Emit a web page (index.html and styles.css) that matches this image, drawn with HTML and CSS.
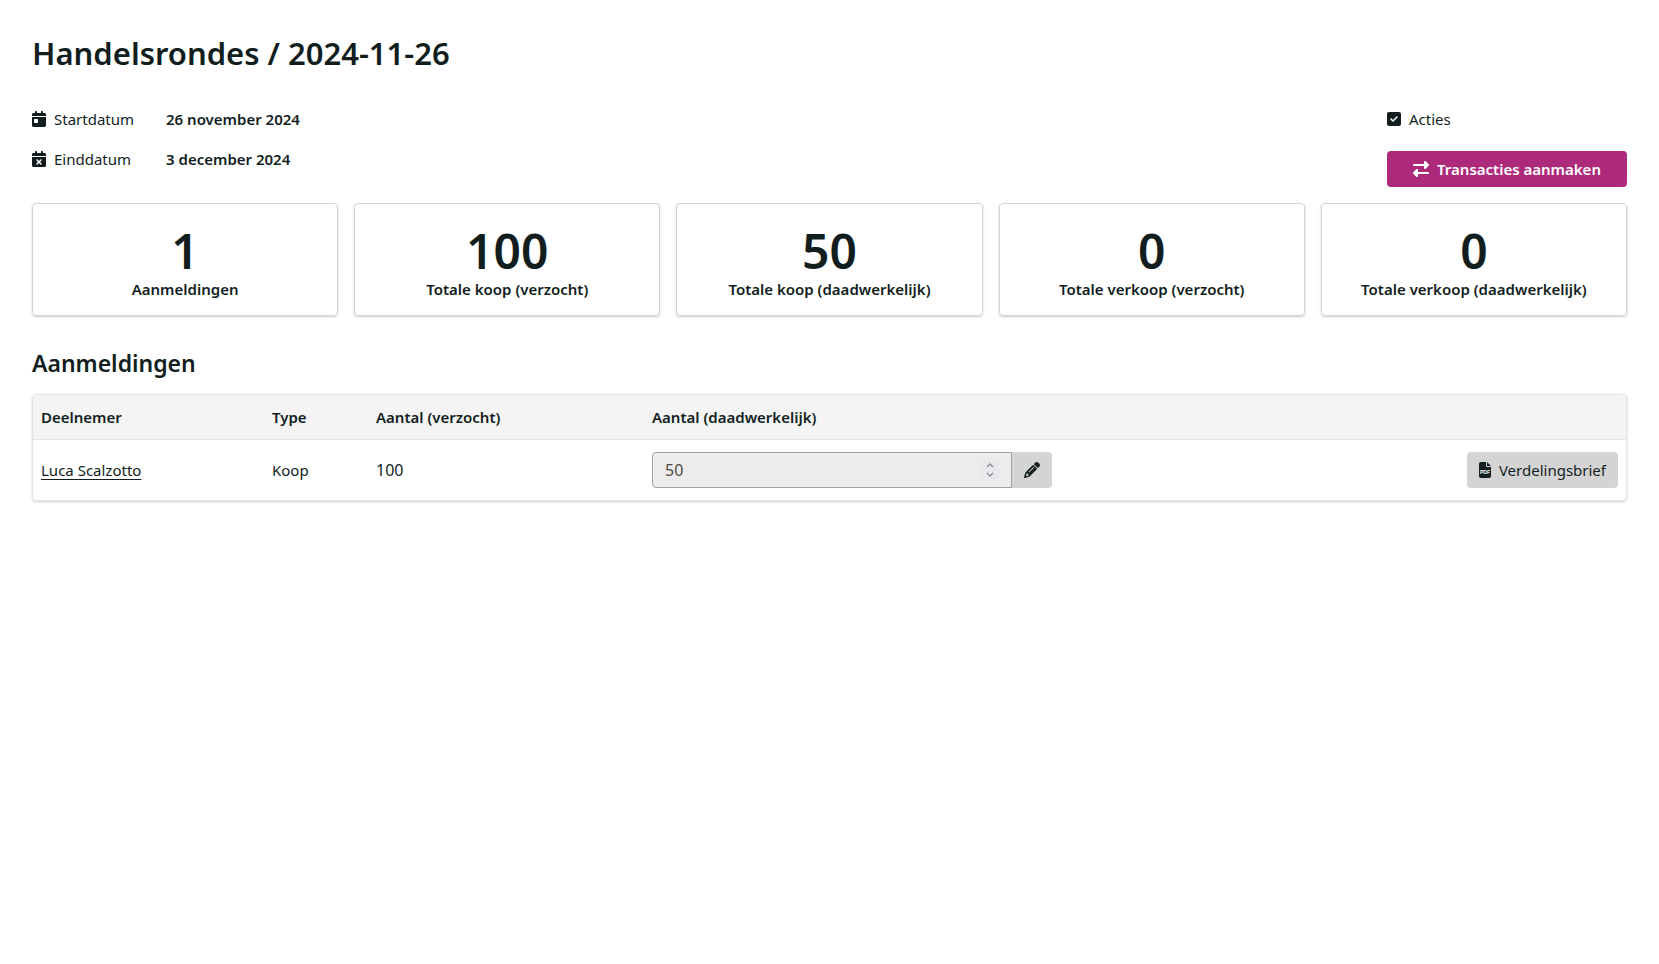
FILE: index.html
```
<!DOCTYPE html>
<html lang="nl">
<head>
<meta charset="utf-8">
<title>Handelsrondes / 2024-11-26</title>
<meta name="viewport" content="width=device-width, initial-scale=1">
<link rel="stylesheet" href="styles.css">
</head>
<body>
<main class="page">
  <h1 class="page-title">Handelsrondes / 2024-11-26</h1>

  <section class="summary">
    <dl class="dates">
      <dt class="label"><svg class="icon" viewBox="0 0 448 512" aria-hidden="true"><path d="M128 0c17.700 0 32 14.300 32 32V64H288V32c0-17.700 14.300-32 32-32s32 14.300 32 32V64h48c26.500 0 48 21.500 48 48v48H0V112C0 85.500 21.500 64 48 64H96V32c0-17.700 14.300-32 32-32zM0 192H448V464c0 26.500-21.500 48-48 48H48c-26.500 0-48-21.500-48-48V192zm80 64c-8.800 0-16 7.200-16 16v96c0 8.800 7.200 16 16 16h96c8.800 0 16-7.200 16-16V272c0-8.800-7.200-16-16-16H80z"/></svg>Startdatum</dt>
      <dd class="date">26 november 2024</dd>
      <dt class="label"><svg class="icon" viewBox="0 0 448 512" aria-hidden="true"><path fill-rule="evenodd" d="M128 0c17.700 0 32 14.300 32 32V64H288V32c0-17.700 14.300-32 32-32s32 14.300 32 32V64h48c26.500 0 48 21.500 48 48v48H0V112C0 85.500 21.500 64 48 64H96V32c0-17.700 14.300-32 32-32zM0 192H448V464c0 26.500-21.500 48-48 48H48c-26.500 0-48-21.500-48-48V192zM305 305c9.400-9.400 9.400-24.600 0-33.900s-24.600-9.400-33.900 0l-47 47-47-47c-9.400-9.400-24.600-9.400-33.900 0s-9.400 24.600 0 33.900l47 47-47 47c-9.400 9.400-9.400 24.600 0 33.900s24.600 9.400 33.900 0l47-47 47 47c9.400 9.400 24.600 9.400 33.900 0s9.400-24.600 0-33.900l-47-47 47-47z"/></svg>Einddatum</dt>
      <dd class="date">3 december 2024</dd>
    </dl>
    <div class="actions">
      <div class="label"><svg class="icon" viewBox="0 0 448 512" aria-hidden="true"><path d="M64 32C28.700 32 0 60.700 0 96V416c0 35.300 28.700 64 64 64H384c35.300 0 64-28.700 64-64V96c0-35.300-28.700-64-64-64H64zM337 209L209 337c-9.400 9.400-24.600 9.400-33.900 0l-64-64c-9.400-9.400-9.400-24.600 0-33.900s24.600-9.400 33.900 0l47 47L303 175c9.400-9.400 24.600-9.400 33.900 0s9.400 24.600 0 33.900z"/></svg>Acties</div>
      <button class="button button-primary" type="button"><svg class="icon" viewBox="0 0 512 512" aria-hidden="true"><path d="M32 96l320 0V32c0-12.900 7.800-24.600 19.800-29.600s25.700-2.200 34.900 6.900l96 96c6 6 9.400 14.100 9.400 22.600s-3.400 16.600-9.400 22.600l-96 96c-9.200 9.200-22.900 11.900-34.900 6.900s-19.800-16.600-19.800-29.600V160L32 160c-17.700 0-32-14.300-32-32s14.300-32 32-32zM480 352c17.700 0 32 14.300 32 32s-14.300 32-32 32H160v64c0 12.900-7.800 24.600-19.800 29.600s-25.700 2.200-34.900-6.900l-96-96c-6-6-9.400-14.100-9.400-22.600s3.400-16.600 9.400-22.600l96-96c9.200-9.200 22.900-11.900 34.900-6.900s19.800 16.600 19.800 29.600l0 64H480z"/></svg>Transacties aanmaken</button>
    </div>
  </section>

  <section class="stats">
    <div class="card"><div class="value">1</div><div class="caption">Aanmeldingen</div></div>
    <div class="card"><div class="value">100</div><div class="caption">Totale koop (verzocht)</div></div>
    <div class="card"><div class="value">50</div><div class="caption">Totale koop (daadwerkelijk)</div></div>
    <div class="card"><div class="value">0</div><div class="caption">Totale verkoop (verzocht)</div></div>
    <div class="card"><div class="value">0</div><div class="caption">Totale verkoop (daadwerkelijk)</div></div>
  </section>

  <h2 class="section-title">Aanmeldingen</h2>
  <div class="table-box">
    <table class="table">
      <colgroup><col class="col-name"><col class="col-type"><col class="col-asked"><col class="col-actual"><col></colgroup>
      <thead>
        <tr><th scope="col">Deelnemer</th><th scope="col">Type</th><th scope="col">Aantal (verzocht)</th><th scope="col" id="actual">Aantal (daadwerkelijk)</th><td></td></tr>
      </thead>
      <tbody>
        <tr>
          <td><a class="link" href="#">Luca Scalzotto</a></td>
          <td>Koop</td>
          <td class="number">100</td>
          <td>
            <div class="field">
              <div class="input-wrap">
                <input class="input" type="number" value="50" aria-labelledby="actual" disabled>
                <svg class="spinner" viewBox="0 0 18 18" aria-hidden="true"><path d="M6 6l3-3 3 3M6 12l3 3 3-3"/></svg>
              </div>
              <button class="edit" type="button" aria-label="Bewerken"><svg class="icon" viewBox="0 0 512 512" aria-hidden="true"><path d="M410.300 231l11.300-11.300-33.900-33.900-62.100-62.100L291.700 89.800l-11.300 11.300-22.600 22.600L58.600 322.900c-10.400 10.400-18 23.300-22.200 37.400L1 480.700c-2.500 8.400-.2 17.500 6.100 23.700s15.300 8.500 23.700 6.100l120.300-35.400c14.100-4.200 27-11.800 37.400-22.200L387.700 253.700 410.300 231zM160 399.400l-9.100 22.700c-4 3.100-8.500 5.400-13.300 6.900L59.400 452l23-78.100c1.400-4.900 3.800-9.400 6.900-13.300l22.700-9.100v32c0 8.800 7.200 16 16 16h32zM362.700 18.700L348.300 33.200 325.700 55.800 314.300 67.100l33.900 33.900 62.100 62.100 33.900 33.900 11.300-11.300 22.600-22.600 14.500-14.500c25-25 25-65.500 0-90.500L453.300 18.700c-25-25-65.500-25-90.500 0zm-47.400 168l-144 144c-6.200 6.200-16.400 6.200-22.600 0s-6.200-16.400 0-22.600l144-144c6.200-6.200 16.400-6.200 22.600 0s6.200 16.400 0 22.600z"/></svg></button>
            </div>
          </td>
          <td class="cell-end"><button class="button" type="button"><svg class="icon" viewBox="0 0 12 16" aria-hidden="true"><path d="M2 0h5v4a1 1 0 0 0 1 1h4v9a2 2 0 0 1-2 2H2a2 2 0 0 1-2-2V2a2 2 0 0 1 2-2zM8 0l4 4H8z"/><text class="pdf" x="6" y="12" text-anchor="middle">PDF</text></svg>Verdelingsbrief</button></td>
        </tr>
      </tbody>
    </table>
  </div>
</main>
</body>
</html>
```
FILE: styles.css
```
* { box-sizing: border-box; }
body {
  margin: 0;
  background: #fff;
  color: #121e1e;
  font: 400 15px/24px "Noto Sans", sans-serif;
}
.page { padding: 32px; }
.page-title { margin: 0; font-size: 31px; line-height: 42px; font-weight: 600; }
.section-title { margin: 31px 0 15px; font-size: 23px; line-height: 32px; font-weight: 600; }
.icon { display: block; flex: none; height: 16px; fill: currentColor; }
.label { display: flex; align-items: center; gap: 8px; }

.summary { display: flex; justify-content: space-between; margin-top: 33px; }
.dates { display: grid; grid-template-columns: auto auto; gap: 16px 32px; align-content: start; margin: 0; }
.date { margin: 0; font-weight: 600; }
.actions { display: flex; flex-direction: column; gap: 20px; width: 240px; }

.button {
  display: inline-flex; align-items: center; justify-content: center; gap: 8px;
  height: 36px; padding: 0 12px;
  border: 0; border-radius: 4px;
  background: #d4d4d4; color: inherit; font: inherit;
}
.button-primary { background: #ad2a7b; color: #fff; font-weight: 600; }

.stats { display: grid; grid-template-columns: repeat(5, 1fr); gap: 16px; margin-top: 16px; }
.card {
  padding: 19px 16px 16px;
  border: 1px solid #d4d4d4; border-radius: 4px;
  box-shadow: 0 1px 3px rgba(0, 0, 0, .1), 0 1px 2px rgba(0, 0, 0, .1);
  text-align: center; font-weight: 600;
}
.value { font-size: 48px; line-height: 56px; }
.caption { line-height: 20px; white-space: nowrap; }

.table-box {
  overflow: hidden;
  border: 1px solid #e4e4e4; border-radius: 4px;
  box-shadow: 0 1px 3px rgba(0, 0, 0, .1), 0 1px 2px rgba(0, 0, 0, .1);
}
.table { width: 100%; border-collapse: collapse; table-layout: fixed; }
.col-name { width: 231px; }
.col-type { width: 104px; }
.col-asked { width: 276px; }
.col-actual { width: 416px; }
.table th, .table td { padding: 12px 8px; text-align: left; }
.table th { padding: 10px 8px; font-weight: 600; }
.table thead tr { background: #f4f4f4; border-bottom: 1px solid #e4e4e4; }
.table .cell-end { text-align: right; }
.table .number { font-size: 16px; }
.cell-end .button { vertical-align: top; }
.link { color: inherit; text-underline-offset: 3px; }

.field { display: flex; }
.input-wrap { position: relative; width: 360px; }
.input {
  display: block; width: 100%; height: 36px; padding: 0 12px;
  border: 1px solid #a1a1a1; border-radius: 4px 0 0 4px;
  background: #ececec; color: #4b4b4b; font: inherit; font-size: 16px;
  appearance: textfield;
}
.input::-webkit-inner-spin-button { display: none; }
.spinner {
  position: absolute; right: 13px; top: 9px; width: 18px; height: 18px;
  background: #e9e9ed; fill: none; stroke: #8f8f9d; stroke-width: 1.5;
}
.edit {
  display: flex; align-items: center; justify-content: center;
  width: 40px; padding: 0; border: 0; border-radius: 0 4px 4px 0;
  background: #d4d4d4; color: inherit;
}
.pdf { fill: #fff; font: 700 5px "Liberation Sans", sans-serif; }
```
